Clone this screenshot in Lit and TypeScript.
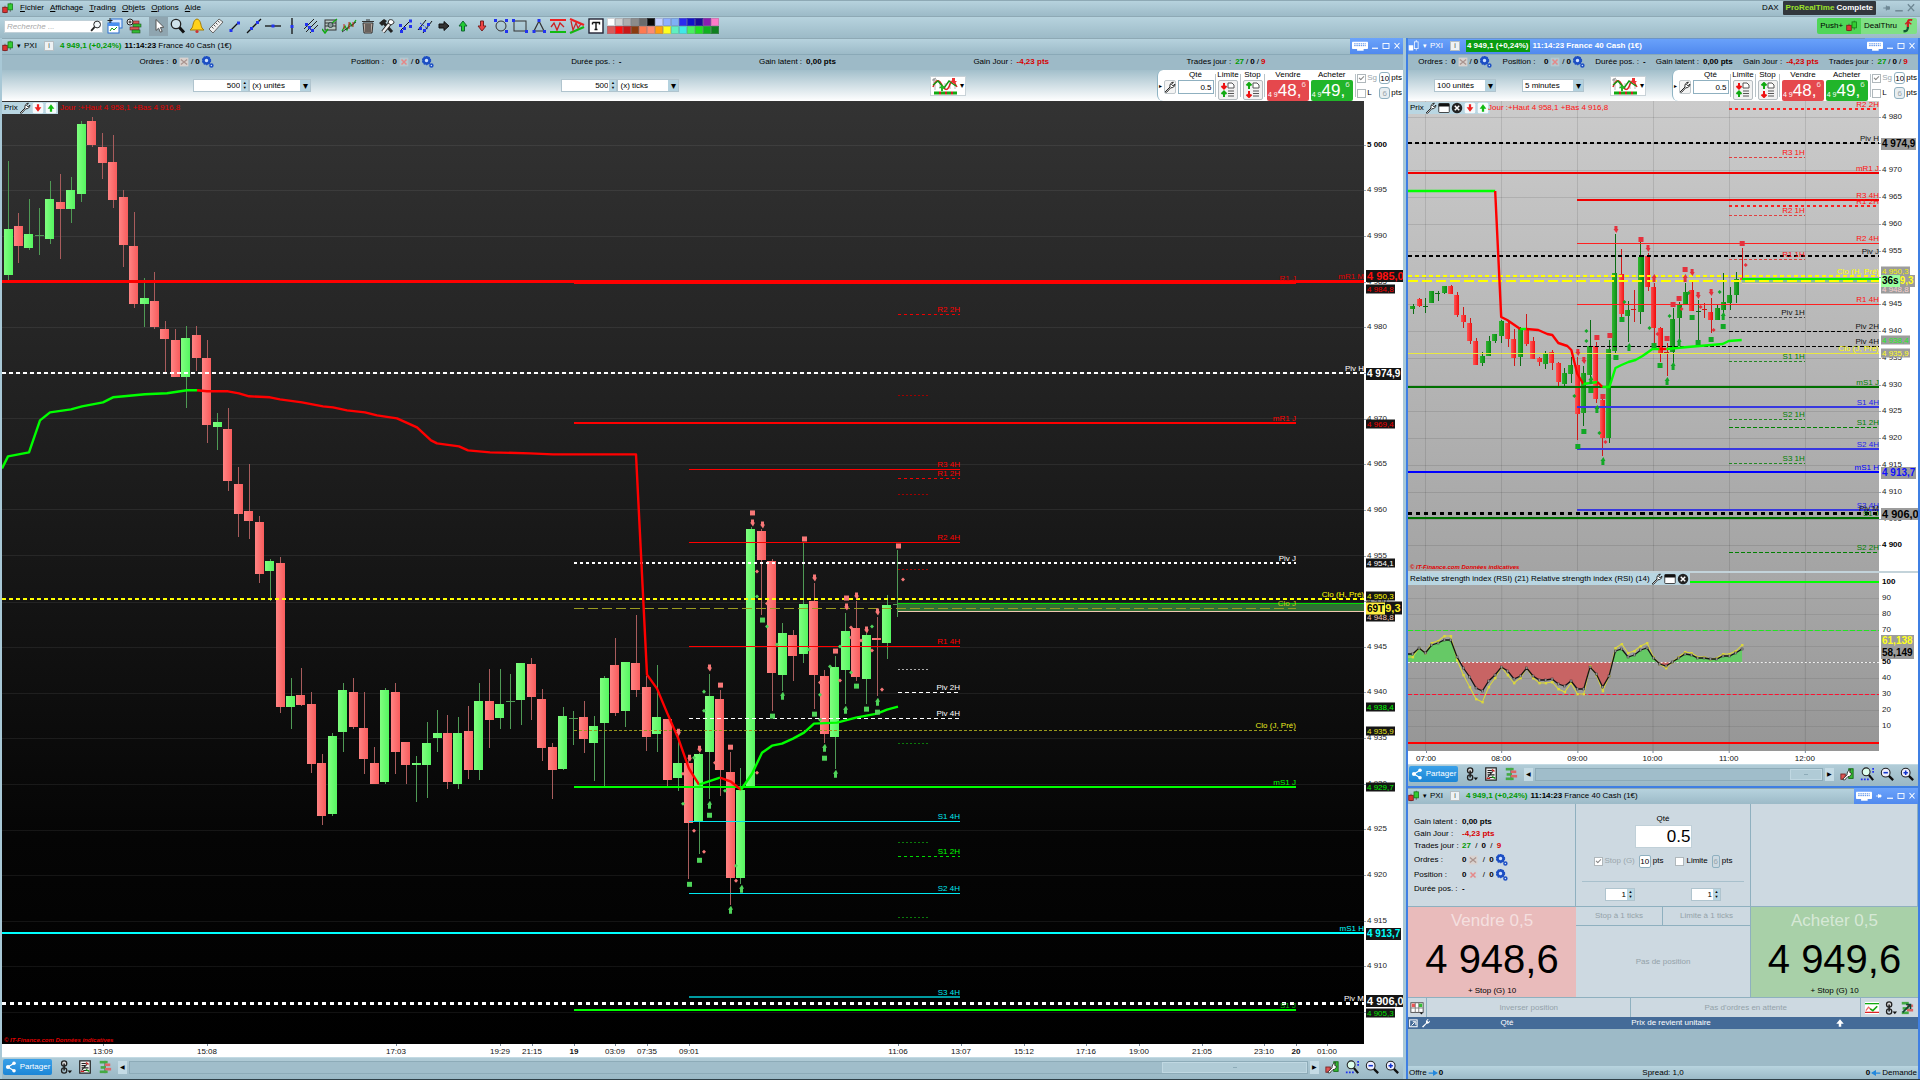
import { LitElement, html, svg, css, nothing } from "lit";
import { customElement, property } from "lit/decorators.js";
import { classMap } from "lit/directives/class-map.js";

/* ---------------------------------------------------------------- icons */

const ICONS: Record<string, unknown> = {
  candles: svg`<path d="M4 5v10M11 1v12" stroke="#444" /><rect x="1" y="7" width="6" height="7" fill="#d33" stroke="#711" /><rect x="8" y="2.500" width="6" height="8" fill="#3c3" stroke="#171" />`,
  candlesWhite: svg`<path d="M11 0v14" stroke="#fff" /><rect x="1" y="7" width="6" height="7" fill="#fff" /><rect x="8.500" y="2.500" width="5" height="9" fill="#5b96f5" stroke="#fff" />`,
  lens: svg`<circle cx="9.500" cy="6" r="4.500" fill="#f4f8fa" stroke="#222" stroke-width="1.300" /><path d="M6 9.500L1.500 14.500" stroke="#222" stroke-width="2.400" />`,
  windows: svg`<rect x="4" y="1" width="11" height="9" fill="#dcebff" stroke="#2a6fd0" /><rect x="1" y="5" width="11" height="10" fill="#fff" stroke="#2a6fd0" /><rect x="1" y="5" width="11" height="3" fill="#4b90f0" /><path d="M3 13l2-3 2 2 3-3" fill="none" stroke="#191" /><path d="M3 0v5M.5 2.500h5" stroke="#222" />`,
  depthPlus: svg`<rect x="5" y="3" width="8" height="3" fill="#d55" stroke="#622" stroke-width=".6" /><rect x="7" y="6" width="8" height="3" fill="#3b3" stroke="#252" stroke-width=".6" /><rect x="4" y="9" width="9" height="3" fill="#d55" stroke="#622" stroke-width=".6" /><rect x="6" y="12" width="8" height="3" fill="#3b3" stroke="#252" stroke-width=".6" /><circle cx="4" cy="4" r="3" fill="#eee" stroke="#222" /><path d="M4 2.500v3M2.500 4h3" stroke="#222" />`,
  depth: svg`<path d="M8 1v14" stroke="#333" /><rect x="2" y="1" width="9" height="3" fill="#4a4" /><rect x="8" y="4" width="6" height="3" fill="#d66" /><rect x="3" y="7" width="6" height="3" fill="#4a4" /><rect x="8" y="9" width="7" height="3" fill="#d66" /><rect x="2" y="12" width="9" height="3" fill="#4a4" />`,
  cursor: svg`<path d="M5 1.500v11l2.600-2.300 1.800 4 1.800-.8-1.800-3.900 3.400-.3z" fill="#fff" stroke="#555" />`,
  magnifier: svg`<path d="M9 9l5 5.500" stroke="#111" stroke-width="3" /><circle cx="6" cy="6" r="4.700" fill="#cfe2ea" stroke="#222" stroke-width="1.300" />`,
  bell: svg`<path d="M8 1c-4 1-3.500 6-5 9l-2 2h14l-2-2c-1.500-3-1-8-5-9z" fill="#ffd21a" stroke="#a67c00" /><circle cx="8" cy="13.500" r="1.600" fill="#c33" />`,
  ruler: svg`<path d="M1 11L11 1l4 3L5 15z" fill="#eee" stroke="#666" /><path d="M4 9l1.500 1.500M6 7l1.500 1.500M8 5l1.500 1.500M10 3l1.500 1.500" stroke="#555" />`,
  segment: svg`<path d="M4 12l7-7" stroke="#111" stroke-width="1.300" /><rect x="2.500" y="11" width="3" height="3" fill="#23e" /><rect x="10" y="3.500" width="3" height="3" fill="#23e" />`,
  line: svg`<path d="M1 15L15 1" stroke="#111" stroke-width="1.300" /><rect x="4" y="9" width="3" height="3" fill="#23e" /><rect x="10" y="3" width="3" height="3" fill="#23e" />`,
  hline: svg`<path d="M0 8h16" stroke="#111" stroke-width="1.300" /><rect x="6.500" y="6.500" width="3" height="3" fill="#23e" />`,
  vline: svg`<path d="M8 0v16" stroke="#111" stroke-width="1.300" /><rect x="6.500" y="7" width="3" height="3" fill="#23e" />`,
  fork: svg`<path d="M1 11L11 1M3 14L14 3M7 15l8-8M3 6l7 8" stroke="#222" /><rect x="2" y="5" width="3" height="3" fill="#23e" /><rect x="8" y="11" width="3" height="3" fill="#23e" /><rect x="5" y="8" width="3" height="3" fill="#23e" />`,
  fibo: svg`<rect x="3" y="2" width="11" height="10" fill="#b9c9c4" stroke="#333" /><path d="M3 5h11M3 8h11" stroke="#333" /><path d="M0 11l3 4 3-4" fill="none" stroke="#1a1" stroke-width="1.500" /><path d="M10 5l5-4" stroke="#1a1" stroke-width="1.300" /><circle cx="8.500" cy="7" r="2.500" fill="#899" stroke="#344" />`,
  trend: svg`<path d="M1 13l3-5 2 4 3-7 2 3 4-6" fill="none" stroke="#1a1" stroke-width="1.300" /><path d="M1 14L15 4" stroke="#333" /><path d="M3 6v5M8 4v7M12 4v5" stroke="#c22" />`,
  trash: svg`<path d="M3 5h10l-1 10H4z" fill="#b9a99f" stroke="#333" /><path d="M2 3.500h12M6 2h4M6 6v8M8 6v8M10 6v8" stroke="#333" stroke-width="1.200" />`,
  tools: svg`<path d="M3 3l10 11" stroke="#222" stroke-width="3" /><path d="M0 5l5-4 3 2-5 5z" fill="#222" /><path d="M12 4L4 14" stroke="#222" stroke-width="4" /><path d="M12 4L4 14" stroke="#eee" stroke-width="2.400" /><path d="M10 2c2-1 5 0 5 3l-3 2-3-2z" fill="#fff" stroke="#333" />`,
  pair: svg`<path d="M2 13l10-10" stroke="#111" /><g fill="#23e"><rect x="1" y="6" width="3" height="3" /><rect x="5" y="9" width="3" height="3" /><rect x="2" y="12" width="3" height="3" /><rect x="11" y="1.500" width="3" height="3" /><rect x="11" y="7" width="3" height="3" /></g>`,
  parallel: svg`<path d="M1 12L9 2M6 15L15 3" stroke="#111" /><path d="M3 5l8 6" stroke="#23e" stroke-dasharray="2 1" /><g fill="#23e"><rect x="2" y="9" width="3" height="3" /><rect x="6" y="11" width="3" height="3" /><rect x="10" y="5" width="3" height="3" /></g>`,
  right: svg`<path d="M3 6h5V3.500L13 8l-5 4.500V10H3z" fill="#333" stroke="#111" />`,
  up: svg`<path d="M6.500 13V8H4l4-5 4 5H9.500v5z" fill="#2c3" stroke="#163" />`,
  down: svg`<path d="M6.500 3v5H4l4 5 4-5H9.500V3z" fill="#e44" stroke="#722" />`,
  ellipse: svg`<circle cx="8" cy="8" r="5" fill="none" stroke="#333" /><g fill="#23e"><rect x="1" y="1" width="3" height="3" /><rect x="12" y="1" width="3" height="3" /><rect x="12" y="12" width="3" height="3" /></g>`,
  rect: svg`<rect x="2" y="3" width="12" height="10" fill="none" stroke="#333" /><g fill="#23e"><rect x="0" y="1" width="3" height="3" /><rect x="13" y="12" width="3" height="3" /></g>`,
  triangle: svg`<path d="M8 3l5 10H3z" fill="none" stroke="#333" stroke-width="1.200" /><g fill="#23e"><rect x="6.500" y="1" width="3" height="3" /><rect x="1.500" y="12" width="3" height="3" /><rect x="12" y="12" width="3" height="3" /></g>`,
  channel: svg`<path d="M0 2h16" stroke="#e22" stroke-width="2" /><path d="M0 14h16" stroke="#1b1" stroke-width="2" /><path d="M1 9l3-4 3 7 3-7 4 4" fill="none" stroke="#c22" stroke-width="1.300" />`,
  wedge: svg`<path d="M1 1l14 6" stroke="#e22" stroke-width="2.200" /><path d="M1 15l14-6" stroke="#1b1" stroke-width="2.200" /><path d="M2 3l2 9 3-7 2 5 3-4" fill="none" stroke="#c22" stroke-width="1.200" />`,
  textTool: svg`<rect x="1" y="1" width="14" height="14" fill="#fff" stroke="#223" stroke-width="1.400" /><path d="M4.500 4.500h7v2M4.500 4.500v2M8 4.500v7M6.500 11.500h3" fill="none" stroke="#111" stroke-width="1.400" />`,
  wrench: svg`<path d="M1.500 14.500L8 8c-.8-3 1.200-6.500 4.500-6.500L10 4.500 12 6.500l2.500-2.500c.3 3.500-3 5.500-5.500 5L3.500 15z" fill="#fff" stroke="#222" stroke-width="1.300" />`,
  wrenchWhite: svg`<path d="M1.500 14L8 8c-.8-3 1.200-6.500 4.500-6.500L10 4.500 12 6.500l2.500-2.500c.3 3.500-3 5.500-5.500 5L3.500 15z" fill="#fff" />`,
  pane: svg`<rect x="1" y="2" width="14" height="12" rx="1" fill="#fff" stroke="#111" /><rect x="1" y="2" width="14" height="4" fill="#111" />`,
  closeRound: svg`<circle cx="8" cy="8" r="7" fill="#222" /><path d="M5 5l6 6M11 5l-6 6" stroke="#fff" stroke-width="2" />`,
  tileDown: svg`<rect x="1" y="1" width="14" height="14" rx="2" fill="#f6fafc" /><path d="M6.500 3v4H3.500l4.500 6 4.500-6H9.500V3z" fill="#e22" />`,
  tileUp: svg`<rect x="1" y="1" width="14" height="14" rx="2" fill="#f6fafc" /><path d="M6.500 13V9H3.500l4.500-6 4.500 6H9.500v4z" fill="#1b1" />`,
  cancelGrey: svg`<rect x="1" y="1" width="14" height="14" fill="#d9d2cf" /><path d="M3 4l10 8M13 4L3 12" stroke="#a9948f" stroke-width="2" />`,
  cancelRed: svg`<rect x="1" y="1" width="14" height="14" fill="#ccd5da" opacity=".5" /><path d="M4 4l8 8M12 4l-8 8" stroke="#e58888" stroke-width="2.400" />`,
  gears: svg`<circle cx="6" cy="6" r="4" fill="#cfe0ff" stroke="#1d4fc4" stroke-width="3.400" /><circle cx="6" cy="6" r="5.500" fill="none" stroke="#1d4fc4" stroke-width="1.500" stroke-dasharray="2 1.500" /><circle cx="12.500" cy="12.500" r="2" fill="#cfe0ff" stroke="#1d4fc4" stroke-width="2" />`,
  keyboard: svg`<rect x="0" y="2" width="22" height="10" rx="1" fill="#fff" /><path d="M3 5h16M3 7.500h16" stroke="#4a86e8" stroke-width="1.300" stroke-dasharray="2 1" /><rect x="7" y="12" width="9" height="2.500" fill="#fff" />`,
  chartKind: svg`<rect x="0" y="0" width="26" height="18" fill="#fff" /><path d="M3 13V6M8 12V4M13 13V6M18 12V3M23 12V5" stroke="#bbb" /><path d="M1 3l3-2M2 1v5M0 3h5" stroke="#999" /><path d="M1 10c3-8 6-8 9-2s6 6 8-1l3-4 4 7" fill="none" stroke="#d22" stroke-width="1.500" /><path d="M1 8l5-4 6 7 5-7 7 5" fill="none" stroke="#191" stroke-width="1.500" /><path d="M2 16h5M9 16h4M15 16h4M21 16h4" stroke="#1a1" stroke-width="3" /><path d="M7 16h2M13 16h2M19 16h2" stroke="#c22" stroke-width="3" /><path d="M20 1h3v3h2l-3 3-4-3h2z" fill="#e33" /><path d="M9 14v-3H7l3-3 3 3h-2v3z" fill="#2b2" />`,
  limit: svg`<path d="M4 1v5M1.500 4L4 6.500 6.500 4" stroke="#e11" stroke-width="2" fill="none" /><path d="M4 15v-5M1.500 12L4 9.500 6.500 12" stroke="#1a1" stroke-width="2" fill="none" /><path d="M8 1h4l2 2v3H8zM8 9h6M8 11.500h6M8 14h6" fill="#fff" stroke="#555" />`,
  stop: svg`<path d="M4 7V1M1.500 3.500L4 1l2.500 2.500" stroke="#1a1" stroke-width="2" fill="none" /><path d="M4 9v6M1.500 12.500L4 15l2.500-2.500" stroke="#e11" stroke-width="2" fill="none" /><path d="M8 1h4l2 2v3H8zM8 9h6M8 11.500h6M8 14h6" fill="#fff" stroke="#555" />`,
  share: svg`<path d="M12 3L4 8l8 5" fill="none" stroke="#fff" stroke-width="1.600" /><circle cx="12" cy="3" r="2.400" fill="#fff" /><circle cx="4" cy="8" r="2.800" fill="#fff" /><circle cx="12" cy="13" r="2.400" fill="#fff" />`,
  chain: svg`<circle cx="7" cy="4" r="3" fill="#ddd" stroke="#222" stroke-width="1.500" /><path d="M7 4v8" stroke="#222" stroke-width="1.800" /><circle cx="7" cy="12" r="3" fill="none" stroke="#222" stroke-width="1.500" /><path d="M11 12h5l-2.500 3z" fill="#111" />`,
  note: svg`<rect x="2" y="1" width="12" height="14" fill="#eee" stroke="#222" stroke-width="1.400" /><path d="M4 4h5M4 6.500h4M4 12l6-7M6 12h6M4 9h8" stroke="#222" stroke-width="1.300" /><path d="M9 3l3 2M3 13h4" stroke="#c22" stroke-width="1.500" /><path d="M9 11l4 2" stroke="#191" stroke-width="1.600" />`,
  wrenchCandles: svg`<rect x="1" y="8" width="5" height="6" fill="#d55" stroke="#722" /><rect x="10" y="2" width="5" height="11" fill="#3b3" stroke="#161" /><path d="M3 14l5-5c0-3 1-5 4-6l-1 3 2 1c0 3-2 4-4 4l-4 4z" fill="#fff" stroke="#222" />`,
  depthArrow: svg`<rect x="2" y="1" width="8" height="3" fill="#4a4" /><rect x="8" y="4" width="7" height="3" fill="#d66" /><rect x="3" y="7" width="7" height="3" fill="#4a4" /><rect x="8" y="9" width="7" height="3" fill="#d66" /><rect x="2" y="12" width="8" height="3" fill="#4a4" /><path d="M3 13l8-8M7 4h5v5" fill="none" stroke="#143" stroke-width="1.800" />`,
  zoomFit: svg`<path d="M10 9l5 6" stroke="#111" stroke-width="2.600" /><circle cx="7" cy="5.500" r="4.500" fill="#dfe" stroke="#222" stroke-width="1.200" /><path d="M1 14h9M15 1v7" stroke="#23e" stroke-width="2" stroke-dasharray="2 1.500" />`,
  zoomOut: svg`<path d="M9 9l6 6" stroke="#111" stroke-width="2.600" /><circle cx="6.500" cy="6.500" r="5" fill="#eef" stroke="#222" stroke-width="1.200" /><path d="M4 6.500h5" stroke="#13c" stroke-width="1.800" />`,
  zoomIn: svg`<path d="M9 9l6 6" stroke="#111" stroke-width="2.600" /><circle cx="6.500" cy="6.500" r="5" fill="#eef" stroke="#222" stroke-width="1.200" /><path d="M4 6.500h5M6.500 4v5" stroke="#13c" stroke-width="1.800" />`,
  pin: svg`<path d="M2 8h5M7 4v8M7 6h5v4H7z" fill="currentColor" stroke="currentColor" stroke-width="1.500" />`,
  min: svg`<path d="M2 12.500h12" stroke="currentColor" stroke-width="2.400" />`,
  max: svg`<rect x="2" y="3" width="12" height="10" fill="none" stroke="currentColor" stroke-width="1.800" />`,
  close: svg`<path d="M3 2l10 11M13 2L3 13" stroke="currentColor" stroke-width="2.200" />`,
  thru: svg`<path d="M14 1c-4-1-5 1-5 4v4" stroke="#c22" stroke-width="2.600" fill="none" /><path d="M6 6l3-3 4 3" fill="none" stroke="#c22" stroke-width="1.600" /><path d="M9 9c0 4-1 5-5 5" stroke="#153" stroke-width="2.600" fill="none" />`,
  layout: svg`<rect x="1" y="2" width="14" height="11" fill="#fff" stroke="#444" /><rect x="2" y="3" width="4" height="4" fill="#e55" /><rect x="10" y="3" width="4" height="4" fill="#3b3" /><path d="M6 2v11M10 2v11M1 8h14" stroke="#777" /><path d="M11 13h4l-2 2.500z" fill="#111" />`,
  signal: svg`<rect x="0" y="1" width="16" height="14" fill="#fff" /><path d="M0 3h16" stroke="#1a1" stroke-width="1.500" /><path d="M0 13h16" stroke="#d22" stroke-width="1.500" /><path d="M1 11l3-4 3 3" fill="none" stroke="#e66" stroke-width="1.500" /><path d="M6 9l3 2 5-5" fill="none" stroke="#1a1" stroke-width="1.800" />`,
  export: svg`<rect x="1" y="3" width="12" height="11" fill="none" stroke="#fff" stroke-width="1.600" /><path d="M4 12l5-5M6 6h5v5" stroke="#fff" stroke-width="1.600" fill="none" />`,
  upWhite: svg`<path d="M6 14V9H2l6-7 6 7h-4v5z" fill="#fff" />`,
  arrowRight: svg`<path d="M1 8h9M9 5l5 3-5 3z" fill="#28d" stroke="#28d" stroke-width="2" />`,
  arrowLeft: svg`<path d="M15 8H6M7 5L2 8l5 3z" fill="#28d" stroke="#28d" stroke-width="2" />`,
};

const icon = (name: string, size = "") => {
  const box = name === "keyboard" ? "0 0 22 16" : name === "chartKind" ? "0 0 26 18" : "0 0 16 16";
  return html`<svg class="icon ${size}" viewBox=${box} aria-hidden="true">${ICONS[name]}</svg>`;
};

const base = css`
  * { box-sizing: border-box; }
  :host {
    font-family: "Liberation Sans", Arial, sans-serif;
    font-size: 8px;
    line-height: 10px;
    color: #000;
  }
  button, input, select { font: inherit; color: inherit; margin: 0; padding: 0; }
  button { border: 0; background: none; display: inline-flex; align-items: center; justify-content: center; }
  input { min-width: 0; border: 1px solid #8fb0c0; background: #fff; text-align: right; border-radius: 0; }
  .icon { width: 14px; height: 14px; flex: none; display: block; }
  .icon.s { width: 10px; height: 10px; }
  .icon.m { width: 12px; height: 12px; }
  .icon.w { width: 16px; height: 12px; }
  .icon.kind { width: 26px; height: 18px; }
  .tick {
    appearance: none; width: 9px; height: 9px; border: 1px solid #b0b8bc; background: #fff;
    position: relative; flex: none;
  }
  .tick:checked::after {
    content: ""; position: absolute; left: 2px; top: 0; width: 2px; height: 4px;
    border: solid #888; border-width: 0 1px 1px 0; transform: rotate(45deg);
  }
  .pos { color: #009a00; }
  .neg { color: #d80000; }
  .dim { color: #9aa6ac; }
  b { white-space: nowrap; }
`;

/* ---------------------------------------------------------------- chart */

type Candle = [number, number, number, number, "g" | "r"];
/** x1, x2, y, colour, width, dash, label, label colour */
type Level = [number, number, number, string, number, string?, string?, string?];
type Tag = { y: number; text: string; fg: string; size?: "md" | "lg"; lead?: string };
type Run = { c: string; p: string };
type Mark = [string, [number, number][]];

interface ChartData {
  box: [number, number, number, number];
  dark: boolean;
  first: number;
  pitch: number;
  body: number;
  candles: Candle[];
  levels: Level[];
  runs: Run[];
  marks: Mark[];
  tags: Tag[];
  scale: { top: number; y: number; step: number; count: number; bold: number[] };
  verticals: number[];
  zone: { x: number; top: number; bottom: number; fill: string; line: string; base: string };
}

const pct = (v: number, from: number, span: number) => `${(((v - from) / span) * 100).toFixed(3)}%`;

const glyph = (kind: string, x: number, y: number) => {
  const red = kind[0] === "r";
  const fill = red ? "var(--mark-red)" : "var(--mark-green)";
  switch (kind[1]) {
    case "s":
      return svg`<rect x=${x - 2} y=${y - 2} width="5" height="5" fill=${fill} />`;
    case "d":
      return svg`<path d="M${x - 1} ${y - 3}h3v3h1l-2 4-3-4h1z" fill=${fill} />`;
    case "u":
      return svg`<path d="M${x - 1} ${y + 4}h3v-4h1l-2-4-3 4h1z" fill=${fill} />`;
    default:
      return svg`<path d="M${x} ${y - 2}l2 2-2 2-2-2z" fill=${fill} />`;
  }
};

@customElement("price-chart")
class PriceChart extends LitElement {
  @property({ attribute: false }) data!: ChartData;

  static styles = [
    base,
    css`
      :host { display: grid; grid-template-columns: minmax(0, 1fr) 39px; min-height: 0; flex: 1; background: #fff; }
      .plot { position: relative; overflow: hidden; background: linear-gradient(#cbcbcb, #a4a4a4); --mark-red: #e5303c; --mark-green: #12a826; }
      .plot.dark { background: linear-gradient(#333 0, #1f1f1f 35%, #050505 78%, #000); --mark-red: #f87878; --mark-green: #4fd45a; }
      svg.full { position: absolute; inset: 0; width: 100%; height: 100%; }
      .geo { shape-rendering: crispEdges; }
      .geo .soft { shape-rendering: auto; }
      text { font-size: 8px; }
      .axis { position: relative; overflow: hidden; }
      .price { position: absolute; left: 3px; transform: translateY(-50%); white-space: nowrap; color: #222; }
      .price::before { content: ""; position: absolute; left: -3px; top: 5px; width: 2px; height: 1px; background: #9ab; }
      .price.strong { font-weight: bold; color: #000; }
      .tag { position: absolute; left: 2px; padding: 0 1px; line-height: 9px; transform: translateY(-50%); white-space: nowrap; background: #9c9c9c; }
      .dark .tag { background: #151515; }
      .tag.md { font-size: 10px; font-weight: bold; line-height: 12px; }
      .tag.lg { font-size: 11px; font-weight: bold; line-height: 12px; }
      .lead { background: #9dffa0; color: #000; display: inline-block; margin-left: -1px; padding: 0 1px; }
      .dark .lead { background: #ffee40; font-size: 10px; }
      .credit { position: absolute; left: 2px; bottom: 0; color: #e00000; font-size: 6px; line-height: 7px; font-weight: bold; font-style: italic; }
    `,
  ];

  render() {
    const d = this.data;
    const [bx, by, bw, bh] = d.box;
    const s = d.scale;
    const rows = Array.from({ length: s.count }, (_, i) => i);
    const priceText = (v: number) => `${Math.floor(v / 1000)} ${String(v % 1000).padStart(3, "0")}`;
    return html`
      <div class=${classMap({ plot: true, dark: d.dark })}>
        <svg class="full geo" viewBox="${bx} ${by} ${bw} ${bh}" preserveAspectRatio="none" aria-hidden="true">
          <defs>
            <linearGradient id="g"><stop offset="0" stop-color=${d.dark ? "#80ff80" : "#2fb32f"} /><stop offset="1" stop-color=${d.dark ? "#55f560" : "#088a14"} /></linearGradient>
            <linearGradient id="r"><stop offset="0" stop-color=${d.dark ? "#ff8484" : "#ff5555"} /><stop offset="1" stop-color=${d.dark ? "#f85c5c" : "#f00f0f"} /></linearGradient>
          </defs>
          ${rows.map((i) => {
            const y = Math.round(s.y + i * s.step);
            return svg`<rect x=${bx} y=${y} width=${bw} height="1" fill=${d.dark ? "#fff" : "#000"} opacity=${d.dark ? 0.07 : 0.1} />`;
          })}
          ${d.verticals.map((x) => svg`<rect x=${x} y=${by} width="1" height=${bh} fill="#000" opacity=".1" />`)}
          ${d.candles.map(([hi, top, bot, lo, k], i) => {
            const x = d.first + i * d.pitch;
            const wick = d.dark ? (k === "g" ? "#4f9a55" : "#a85c5c") : k === "g" ? "#0b6b14" : "#d01818";
            return svg`<rect x=${Math.round(x)} y=${hi} width="1" height=${lo - hi} fill=${wick} />
              <rect x=${Math.round(x - d.body / 2)} y=${top} width=${d.body} height=${Math.max(1, bot - top)}
                fill=${bot - top < 2 ? wick : `url(#${k})`} />`;
          })}
          <rect x=${d.zone.x} y=${d.zone.top} width=${bx + bw - d.zone.x} height=${d.zone.bottom - d.zone.top} fill=${d.zone.fill} />
          <rect x=${d.zone.x} y=${d.zone.top} width=${bx + bw - d.zone.x} height=${d.dark ? 1 : 2} fill=${d.zone.line} />
          <rect x=${d.zone.x} y=${d.zone.bottom} width=${bx + bw - d.zone.x} height="1" fill=${d.zone.base} />
          ${d.levels.map(([x1, x2, y, c, w, dash]) => {
            const cy = w % 2 ? y + 0.5 : y;
            return svg`<line x1=${x1} x2=${x2} y1=${cy} y2=${cy} stroke=${c} stroke-width=${w} stroke-dasharray=${dash || "none"} />`;
          })}
          <g class="soft">
            ${d.runs.map((r) => svg`<polyline points=${r.p} fill="none" stroke=${r.c} stroke-width="2.400" stroke-linejoin="round" />`)}
            ${d.marks.map(([k, pts]) => pts.map(([x, y]) => glyph(k, x, y)))}
          </g>
        </svg>
        <svg class="full">
          ${d.levels.map(([, x2, y, c, , , label, lc]) =>
            label
              ? svg`<text x=${pct(x2, bx, bw)} y=${pct(y - 2, by, bh)} text-anchor="end" fill=${lc || c}>${label}</text>`
              : nothing,
          )}
        </svg>
        <span class="credit">© IT-Finance.com Données indicatives</span>
      </div>
      <div class=${classMap({ axis: true, dark: d.dark })}>
        ${rows.map((i) => {
          const v = s.top - i * 5;
          return html`<span class=${classMap({ price: true, strong: s.bold.includes(v) })} style="top:${pct(s.y + i * s.step, by, bh)}">${priceText(v)}</span>`;
        })}
        ${d.tags.map(
          (t) => html`<span class="tag ${t.size ?? ""}" style="top:${pct(t.y, by, bh)};color:${t.fg}"
            >${t.lead ? html`<span class="lead">${t.lead}</span>` : nothing}${t.text}</span
          >`,
        )}
      </div>
    `;
  }
}

const RED = "#ff0000";
const LIME = "#00ff00";

const MAIN: ChartData = {
  box: [2, 101, 1362, 942],
  dark: true,
  first: 8,
  pitch: 10.464,
  body: 9,
  scale: { top: 5000, y: 144.800, step: 45.585, count: 20, bold: [5000] },
  verticals: [],
  zone: { x: 898, top: 602, bottom: 610, fill: "#2f6f33", line: "#00e000", base: "#f0c8b0" },
  candles: [
    [161, 229, 275, 280, "g"], [213, 226, 246, 263, "r"], [199, 234, 248, 250, "g"], [208, 235, 236, 255, "g"],
    [181, 199, 239, 244, "g"], [174, 202, 209, 259, "r"], [177, 190, 209, 223, "g"], [121, 124, 194, 202, "g"],
    [117, 121, 145, 147, "r"], [133, 147, 163, 179, "r"], [135, 162, 200, 208, "r"], [190, 197, 245, 267, "r"],
    [212, 246, 304, 308, "r"], [278, 298, 304, 327, "g"], [272, 301, 327, 329, "r"], [321, 329, 339, 373, "r"],
    [329, 340, 377, 377, "r"], [326, 338, 377, 408, "g"], [326, 335, 358, 371, "r"], [340, 358, 425, 443, "r"],
    [413, 422, 427, 450, "g"], [408, 429, 481, 491, "r"], [467, 484, 514, 537, "r"], [464, 511, 521, 539, "r"],
    [516, 522, 573, 582, "r"], [559, 561, 571, 600, "g"], [557, 563, 706, 712, "r"], [677, 695, 706, 728, "g"],
    [667, 694, 704, 705, "r"], [691, 703, 763, 772, "r"], [753, 762, 815, 824, "r"], [732, 735, 813, 815, "g"],
    [682, 689, 731, 751, "g"], [677, 691, 726, 728, "r"], [691, 727, 758, 773, "r"], [746, 762, 783, 783, "r"],
    [687, 689, 781, 783, "g"], [682, 691, 751, 773, "r"], [741, 741, 764, 783, "r"], [755, 762, 764, 801, "g"],
    [721, 742, 764, 797, "g"], [709, 732, 737, 751, "g"], [714, 732, 781, 788, "r"], [716, 732, 783, 788, "g"],
    [705, 730, 769, 778, "r"], [682, 700, 769, 779, "g"], [668, 700, 719, 747, "r"], [668, 703, 717, 728, "g"],
    [673, 700, 701, 728, "g"], [662, 662, 699, 724, "g"], [657, 663, 696, 719, "r"], [688, 698, 747, 760, "r"],
    [742, 746, 769, 798, "r"], [706, 715, 768, 769, "g"], [710, 717, 718, 744, "g"], [700, 716, 738, 752, "r"],
    [715, 725, 742, 780, "g"], [675, 677, 722, 786, "g"], [637, 664, 712, 715, "r"], [661, 661, 710, 726, "g"],
    [614, 662, 689, 696, "r"], [675, 686, 736, 750, "r"], [664, 716, 733, 751, "g"], [718, 718, 779, 786, "r"],
    [728, 762, 777, 790, "g"], [755, 762, 822, 878, "r"], [752, 753, 820, 853, "g"], [673, 695, 751, 798, "g"],
    [689, 698, 769, 795, "r"], [751, 771, 877, 904, "r"], [767, 789, 877, 883, "g"], [527, 529, 786, 786, "g"],
    [529, 531, 560, 614, "r"], [559, 561, 672, 710, "r"], [622, 632, 674, 690, "g"], [629, 634, 655, 680, "r"],
    [543, 603, 653, 662, "g"], [582, 600, 674, 708, "r"], [669, 675, 733, 742, "r"], [655, 666, 736, 768, "g"],
    [612, 630, 669, 703, "g"], [600, 627, 676, 680, "r"], [632, 634, 678, 703, "g"], [616, 637, 639, 695, "r"],
    [594, 604, 642, 658, "g"], [550, 603, 604, 616, "g"],
  ],
  levels: [
    [2, 1364, 281, "#ff0000", 3, "", "mR1 M", "#e00000"],
    [574, 1296, 283, "#ff0000", 1, "", "R1 J", "#e00000"],
    [898, 960, 314, "#f00000", 1, "3 3", "R2 2H", "#ff0000"],
    [2, 1364, 373, "#ffffff", 2, "4 3", "Piv H"],
    [898, 928, 395, "#a00000", 1, "2 2"],
    [574, 1296, 423, RED, 2, "", "mR1 J"],
    [689, 960, 469, RED, 1, "", "R3 4H"],
    [898, 960, 478, "#f00000", 1, "3 3", "R1 2H", "#ff0000"],
    [898, 928, 494, "#a00000", 1, "2 2"],
    [689, 960, 542, RED, 1, "", "R2 4H"],
    [574, 1296, 563, "#ffffff", 2, "3 3", "Piv J"],
    [898, 928, 569, "#a00000", 1, "2 2"],
    [2, 1364, 598, "#ffff00", 2, "4 3", "Clo (H, Pré)"],
    [574, 1296, 607, "#9a9a20", 1, "10 4", "Clo J", "#c8c820"],
    [689, 960, 645, RED, 1, "", "R1 4H"],
    [898, 928, 668, "#aaaaaa", 1, "2 2"],
    [898, 960, 691, "#ffffff", 1, "4 3", "Piv 2H"],
    [689, 960, 717, "#ffffff", 1, "4 3", "Piv 4H"],
    [574, 1296, 729, "#98981c", 1, "3 2", "Clo (J, Pré)", "#e8e820"],
    [898, 928, 742, "#0a7a0a", 1, "2 2"],
    [574, 1296, 786, LIME, 2, "", "mS1 J"],
    [689, 960, 820, "#00e8f0", 1, "", "S1 4H"],
    [898, 928, 841, "#0a7a0a", 1, "2 2"],
    [898, 960, 855, "#00d800", 1, "3 3", "S1 2H", LIME],
    [689, 960, 892, "#00e8f0", 1, "", "S2 4H"],
    [898, 928, 916, "#0a7a0a", 1, "2 2"],
    [2, 1364, 932, "#00ffff", 2, "", "mS1 H"],
    [689, 960, 996, "#009aa0", 2, "", "S3 4H", "#00e8f0"],
    [574, 1296, 1009, LIME, 2, "", "S1 J", "#0ab00a"],
    [2, 1364, 1002, "#ffffff", 3, "4 4", "Piv M"],
  ],
  runs: [
    { c: LIME, p: "2,468 8,456 29,452 40,420 50,412 71,409 82,406 103,402 113,397 124,396 145,394 167,393 187,390 197,390" },
    { c: "#ff0000", p: "197,390 207,391 228,391 239,393 249,396 270,397 280,399 302,402 323,406 333,407 347,410 365,412 377,415 397,418 417,427 431,440 437,443 459,446 468,450 490,452 530,453 553,454 636,454 647,674 657,688 667,712 678,737 689,768 699,784" },
    { c: LIME, p: "699,784 720,777" },
    { c: "#ff0000", p: "720,777 731,781 741,789" },
    { c: LIME, p: "741,789 752,773 762,752 772,745 782,743 793,738 804,732 814,723 837,722 856,717 877,713 887,709 898,706" },
  ],
  marks: [
    ["rs", [[752, 512], [804, 538], [898, 545], [846, 597], [835, 650], [720, 684], [730, 746]]],
    ["rd", [[752, 522], [762, 524], [814, 577], [846, 606], [856, 595], [866, 629], [877, 611], [709, 667], [699, 748], [689, 757], [678, 731]]],
    ["gs", [[762, 619], [772, 715], [814, 713], [824, 757], [856, 685], [866, 708], [877, 711], [709, 814], [699, 859], [689, 883]]],
    ["gu", [[782, 695], [845, 709], [877, 701], [824, 747], [835, 773], [709, 804], [741, 888], [730, 909]]],
    ["rx", [[903, 579], [882, 689], [757, 571], [767, 603], [757, 772], [715, 762], [704, 851], [694, 830], [736, 880], [683, 773], [851, 627], [851, 637], [820, 682], [840, 680], [861, 640], [872, 650]]],
    ["gx", [[872, 626], [757, 596], [767, 626], [704, 691], [704, 710], [694, 757], [683, 803], [725, 790], [736, 865], [820, 694], [820, 719], [830, 666], [840, 646], [851, 672], [777, 644], [809, 649]]],
  ],
  tags: [
    { y: 289, text: "4 984,8", fg: "#f00000" },
    { y: 276, text: "4 985,0", fg: "#ff1010", size: "lg" },
    { y: 374, text: "4 974,9", fg: "#ffffff", size: "md" },
    { y: 424, text: "4 969,4", fg: "#f00000" },
    { y: 563, text: "4 954,1", fg: "#ffffff" },
    { y: 595, text: "4 950,3", fg: "#ffff00" },
    { y: 616, text: "4 948,8", fg: "#f8c8b8" },
    { y: 607, text: "9,3", fg: "#ffee20", size: "lg", lead: "69T" },
    { y: 706, text: "4 938,4", fg: "#00ff00" },
    { y: 730, text: "4 935,9", fg: "#e0e020" },
    { y: 786, text: "4 929,7", fg: "#00f000" },
    { y: 933, text: "4 913,7", fg: "#00ffff", size: "md" },
    { y: 1012, text: "4 905,3", fg: "#00e000" },
    { y: 1000, text: "4 906,0", fg: "#ffffff", size: "lg" },
  ],
};

const SIDE: ChartData = {
  box: [1408, 101, 470, 470],
  dark: false,
  first: 1412.700,
  pitch: 6.320,
  body: 5,
  scale: { top: 4980, y: 116.700, step: 26.790, count: 17, bold: [4900] },
  verticals: [1425, 1501, 1577, 1652, 1728, 1804],
  zone: { x: 1741, top: 278, bottom: 283, fill: "#8fc48f", line: "#00f000", base: "#e8c4c4" },
  candles: [
    [304, 306, 309, 314, "g"], [298, 299, 306, 307, "r"], [298, 306, 307, 313, "g"], [291, 291, 303, 303, "g"],
    [291, 293, 294, 301, "g"], [286, 286, 293, 294, "g"], [285, 286, 294, 294, "r"], [292, 295, 315, 317, "r"],
    [307, 315, 322, 328, "r"], [318, 323, 341, 344, "r"], [338, 341, 365, 365, "r"], [352, 356, 363, 366, "g"],
    [336, 341, 356, 356, "g"], [334, 334, 341, 343, "g"], [320, 321, 336, 343, "g"], [322, 323, 339, 347, "r"],
    [329, 339, 358, 366, "r"], [327, 329, 357, 366, "g"], [314, 329, 344, 346, "r"], [337, 341, 359, 359, "r"],
    [357, 358, 362, 366, "r"], [351, 353, 364, 369, "g"], [350, 352, 363, 370, "r"], [362, 363, 382, 386, "r"],
    [368, 373, 384, 388, "g"], [357, 365, 374, 383, "g"], [357, 365, 414, 440, "r"], [366, 373, 413, 426, "g"],
    [320, 346, 375, 382, "g"], [342, 346, 399, 403, "r"], [399, 400, 438, 456, "r"], [340, 349, 438, 443, "g"],
    [234, 273, 351, 353, "g"], [249, 274, 314, 317, "r"], [301, 310, 316, 342, "g"], [290, 309, 310, 322, "r"],
    [242, 257, 312, 324, "g"], [253, 256, 287, 291, "r"], [283, 287, 328, 345, "r"], [327, 328, 354, 362, "r"],
    [343, 352, 353, 376, "r"], [308, 319, 352, 363, "g"], [302, 305, 318, 340, "g"], [283, 292, 304, 304, "g"],
    [280, 290, 311, 311, "r"], [300, 311, 312, 340, "g"], [303, 309, 310, 318, "r"], [298, 312, 320, 333, "r"],
    [305, 308, 320, 320, "g"], [273, 302, 310, 313, "g"], [287, 295, 303, 310, "g"], [272, 279, 295, 303, "g"],
    [248, 278, 280, 282, "r"],
  ],
  levels: [
    [1728, 1878, 109, "#ff2020", 2, "3 3", "R2 2H", "#ff1010"],
    [1408, 1878, 143, "#000000", 2, "4 3", "Piv H", "#111111"],
    [1728, 1804, 157, "#e04040", 1, "3 2", "R3 1H", "#ff1010"],
    [1408, 1878, 173, "#f00000", 2, "", "mR1 J", "#ff1010"],
    [1577, 1878, 200, "#f00000", 2, "", "R3 4H", "#ff1010"],
    [1728, 1878, 206, "#ff2020", 2, "3 3", "R1 2H", "#ff1010"],
    [1728, 1804, 215, "#e04040", 1, "3 2", "R2 1H", "#ff1010"],
    [1577, 1878, 243, "#ff2020", 1, "", "R2 4H", "#ff1010"],
    [1408, 1878, 256, "#000000", 2, "4 3", "Piv J", "#111111"],
    [1728, 1804, 259, "#e04040", 1, "3 2", "R1 1H", "#ff1010"],
    [1408, 1878, 276, "#ffff00", 2, "4 3", "Clo (H, Pré)", "#ffff00"],
    [1408, 1878, 281, "#ffff00", 2, "10 4"],
    [1577, 1878, 304, "#ff2020", 1, "", "R1 4H", "#ff1010"],
    [1728, 1804, 317, "#444444", 1, "3 2", "Piv 1H", "#111111"],
    [1728, 1878, 331, "#000000", 1, "4 2", "Piv 2H", "#111111"],
    [1577, 1878, 346, "#000000", 1, "4 2", "Piv 4H", "#111111"],
    [1408, 1878, 353, "#e8e840", 1, "", "Clo (J, Pré)", "#ffff00"],
    [1728, 1804, 361, "#228822", 1, "3 2", "S1 1H", "#008000"],
    [1408, 1878, 387, "#007000", 2, "", "mS1 J", "#008000"],
    [1577, 1878, 407, "#3838e0", 2, "", "S1 4H", "#2020f0"],
    [1728, 1804, 419, "#228822", 1, "3 2", "S2 1H", "#008000"],
    [1728, 1878, 427, "#008000", 1, "4 2", "S1 2H"],
    [1577, 1878, 449, "#3838e0", 2, "", "S2 4H", "#2020f0"],
    [1728, 1804, 463, "#228822", 1, "3 2", "S3 1H", "#008000"],
    [1408, 1878, 472, "#0000ff", 2, "", "mS1 H"],
    [1577, 1878, 510, "#3838e0", 2, "", "S3 4H", "#2020f0"],
    [1408, 1878, 518, "#007000", 2, "", "S1 J"],
    [1408, 1878, 513, "#000000", 3, "4 4", "Piv M", "#111111"],
    [1728, 1878, 552, "#008000", 1, "4 2", "S2 2H"],
  ],
  runs: [
    { c: "#00ff00", p: "1408,191 1495,191" },
    { c: "#ff0000", p: "1495,191 1501,317 1507,320 1520,329" },
    { c: "#00ff00", p: "1520,329 1526,329" },
    { c: "#ff0000", p: "1526,329 1538,330 1547,334 1552,335 1558,343 1567,346 1571,350 1577,374 1583,384" },
    { c: "#00ff00", p: "1583,384 1597,382" },
    { c: "#ff0000", p: "1597,382 1602,387" },
    { c: "#00ff00", p: "1602,387 1609,387 1615,368 1621,365 1628,362 1635,360 1642,356 1652,349 1659,349" },
    { c: "#ff0000", p: "1659,349 1666,349" },
    { c: "#00ff00", p: "1666,349 1687,347 1722,344 1728,341 1741,340" },
  ],
  marks: [
    ["rd", [[1615, 229], [1647, 248], [1691, 272], [1697, 295], [1710, 292], [1577, 352], [1583, 360]]],
    ["ru", [[1653, 278], [1684, 278]]],
    ["rs", [[1640, 239], [1741, 243], [1684, 269], [1678, 298], [1672, 304], [1666, 338], [1609, 335], [1596, 337], [1602, 396]]],
    ["gs", [[1621, 319], [1615, 357], [1653, 345], [1659, 365], [1691, 317], [1697, 342], [1710, 339], [1722, 326], [1590, 390], [1583, 431], [1577, 446]]],
    ["gu", [[1628, 347], [1678, 342], [1672, 366], [1666, 381], [1722, 316], [1590, 380], [1596, 409], [1602, 461]]],
    ["rx", [[1745, 265], [1700, 307], [1713, 330], [1605, 442], [1657, 334], [1681, 309]]],
    ["gx", [[1586, 331], [1586, 341], [1574, 396], [1624, 302], [1649, 328], [1669, 316], [1688, 293], [1719, 292], [1599, 433]]],
  ],
  tags: [
    { y: 144, text: "4 974,9", fg: "#000000", size: "md" },
    { y: 271, text: "4 950,3", fg: "#f0f000" },
    { y: 289, text: "4 948,8", fg: "#f8d0d0" },
    { y: 281, text: "9,3", fg: "#ffff20", size: "md", lead: "36s" },
    { y: 340, text: "4 938,4", fg: "#20f020" },
    { y: 353, text: "4 935,9", fg: "#ffff20" },
    { y: 473, text: "4 913,7", fg: "#1010ff", size: "md" },
    { y: 514, text: "4 906,0", fg: "#000000", size: "lg" },
  ],
};

/* ------------------------------------------------------------------ rsi */

const RSI_SLOW = [
  654, 648, 653, 645, 643, 640, 640, 657, 668, 677, 688, 691, 681, 675, 667, 671, 679, 676, 668, 676, 680, 680, 679, 684,
  686, 681, 689, 689, 667, 674, 687, 676, 651, 649, 657, 655, 650, 648, 658, 664, 666, 662, 658, 654, 655, 658, 658, 659,
  659, 656, 656, 653, 649,
];
const RSI_FAST = [
  657, 648, 653, 643, 641, 636, 636, 660, 675, 687, 699, 702, 687, 678, 667, 675, 683, 678, 668, 678, 683, 683, 682, 689,
  692, 683, 694, 694, 666, 675, 691, 676, 648, 644, 653, 651, 646, 643, 657, 664, 668, 662, 657, 652, 653, 657, 657, 659,
  658, 654, 654, 651, 645,
];

@customElement("rsi-chart")
class RsiChart extends LitElement {
  static styles = [
    base,
    css`
      :host { display: grid; grid-template-columns: minmax(0, 1fr) 39px; height: 180px; border-top: 2px solid #c3d3da; background: #fff; }
      .plot { position: relative; overflow: hidden; background: linear-gradient(#a8a8a8, #969696); }
      .plot svg { position: absolute; inset: 0; width: 100%; height: 100%; }
      .axis { position: relative; }
      .price { position: absolute; left: 3px; transform: translateY(-50%); color: #222; }
      .strong { font-weight: bold; color: #000; }
      .tag { position: absolute; left: 2px; padding: 0 1px; transform: translateY(-50%); background: #9c9c9c; font-size: 10px; line-height: 12px; font-weight: bold; }
      .fast { color: #ffff20; }
    `,
  ];

  render() {
    const at = (i: number) => 1412.700 + i * 6.320;
    const path = (v: number[]) => ["1408," + v[0], ...v.map((y, i) => `${at(i)},${y}`)].join(" ");
    const area = `1408,662 ${path(RSI_SLOW)} ${at(52)},662`;
    const top = (y: number) => pct(y, 573, 178);
    return html`
      <div class="plot">
        <svg viewBox="1408 573 470 178" preserveAspectRatio="none" aria-hidden="true">
          <clipPath id="over"><rect x="1408" y="573" width="470" height="89" /></clipPath>
          <clipPath id="under"><rect x="1408" y="662" width="470" height="89" /></clipPath>
          ${SIDE.verticals.map((x) => svg`<rect x=${x} y="573" width="1" height="178" opacity=".1" />`)}
          ${[598, 614, 630, 646, 662, 678, 694, 710, 726].map((y) => svg`<rect x="1408" y=${y} width="470" height="1" opacity=".08" />`)}
          <polygon points=${area} fill="#66c966" clip-path="url(#over)" />
          <polygon points=${area} fill="#c86464" clip-path="url(#under)" />
          <path d="M1408 582h470" stroke="#00ff00" stroke-width="2" />
          <path d="M1408 630.500h470" stroke="#20e820" stroke-dasharray="5 2" />
          <path d="M1408 662.500h470" stroke="#f0f0f0" stroke-dasharray="2 2" />
          <path d="M1408 694.500h470" stroke="#ff1030" stroke-dasharray="4 2" />
          <path d="M1408 743h470" stroke="#ff0000" stroke-width="2" />
          <polyline points=${path(RSI_FAST)} fill="none" stroke="#dcd83a" />
          ${RSI_FAST.map((y, i) => svg`<rect x=${at(i) - 1} y=${y - 1} width="2.400" height="2.400" fill="#dcd83a" />`)}
          <polyline points=${path(RSI_SLOW)} fill="none" stroke="#151515" stroke-width="1.300" />
          ${RSI_SLOW.map((y, i) => svg`<rect x=${at(i) - 1} y=${y - 1} width="2" height="2" fill="#aaa" stroke="#333" stroke-width=".5" />`)}
        </svg>
      </div>
      <div class="axis">
        ${[100, 90, 80, 70, 50, 40, 30, 20, 10].map(
          (v) => html`<span class="price ${v === 100 || v === 50 ? "strong" : ""}" style="top:${top(742.500 - v * 1.605)}">${v}</span>`,
        )}
        <span class="tag" style="top:${top(653)}">58,149</span>
        <span class="tag fast" style="top:${top(641)}">61,138</span>
      </div>
    `;
  }
}

/* ---------------------------------------------------------- order strip */

@customElement("order-strip")
class OrderStrip extends LitElement {
  static styles = [
    base,
    css`
      :host { display: flex; flex: 0 0 246px; align-items: stretch; justify-content: space-between; background: #fff; border-left: 1px solid #8fb4c4; border-radius: 6px 0 0 6px; }
      .col { display: flex; flex-direction: column; align-items: center; }
      .col > label, .col > span { line-height: 10px; white-space: nowrap; }
      .narrow { width: 20px; }
      .more { width: 4px; font-size: 6px; }
      .tool { width: 12px; height: 14px; border: 1px solid #c0c8cc; border-radius: 2px; background: #f4f4f4; align-self: center; margin-top: 2px; }
      .qty { width: 36px; height: 14px; padding-right: 1px; }
      .kind { width: 20px; height: 20px; border: 1px solid #b5bcc0; border-radius: 2px; background: #f2f2f2; }
      .kind .icon { width: 16px; height: 16px; }
      .deal { width: 42px; height: 21px; border-radius: 2px; color: #fff; display: flex; align-items: flex-end; justify-content: flex-start; padding: 0 0 1px 1px; }
      .deal b { font-size: 17px; line-height: 19px; font-weight: normal; }
      .deal small { font-size: 7px; line-height: 10px; white-space: pre; }
      .deal sup { font-size: 8px; line-height: 10px; align-self: flex-start; opacity: .8; }
      .sell { background: #e5484d; }
      .buy { background: #21b52a; }
      .bar { width: 1px; background: #b9c3c8; margin: 4px 0; }
      .opts { display: grid; grid-template-columns: 9px 11px 11px auto; gap: 3px 1px; align-content: center; align-items: center; padding-right: 1px; }
      .pt { width: 11px; height: 12px; border-radius: 3px; text-align: center; }
      .pt:disabled { color: #9aa6ac; background: #e8eef1; }
    `,
  ];

  render() {
    return html`
      <button class="more" aria-label="Options">▸</button>
      <button class="tool" aria-label="Réglages">${icon("wrench", "m")}</button>
      <div class="col"><label for="q">Qté</label><input id="q" class="qty" value="0.5" /></div>
      <i class="bar"></i>
      <div class="col narrow"><span>Limite</span><button class="kind" aria-label="Limite">${icon("limit")}</button></div>
      <i class="bar"></i>
      <div class="col narrow"><span>Stop</span><button class="kind" aria-label="Stop">${icon("stop")}</button></div>
      <i class="bar"></i>
      <div class="col">
        <span>Vendre</span><button class="deal sell"><small>4 9</small><b>48,</b><sup>6</sup></button>
      </div>
      <div class="col">
        <span>Acheter</span><button class="deal buy"><small>4 9</small><b>49,</b><sup>6</sup></button>
      </div>
      <i class="bar"></i>
      <div class="opts">
        <input id="sg" class="tick" type="checkbox" checked disabled /><label class="dim" for="sg">Sg</label>
        <input class="pt" value="10" aria-label="Points de stop" /><span>pts</span>
        <input id="l" class="tick" type="checkbox" /><label for="l">L</label>
        <input class="pt" value="6" disabled aria-label="Points de limite" /><span>pts</span>
      </div>
    `;
  }
}

/* ------------------------------------------------------------------ app */

const TOOLS = [
  "windows", "depthPlus", "cursor", "magnifier", "bell", "ruler", "segment", "line", "hline", "vline", "fork", "fibo",
  "trend", "trash", "tools", "pair", "parallel", "right", "up", "down", "ellipse", "rect", "triangle", "channel", "wedge",
  "textTool",
];

const PALETTE = [
  "#ffffff", "#cfcfcf", "#adadad", "#8c8c8c", "#6b6b6b", "#0a0a0a", "#c4d2ff", "#8fb0ff", "#7fb0f5", "#2a2af0", "#1010c8",
  "#180a98", "#8a1cb0", "#ff7ac8", "#d85a5a", "#ff1010", "#c81818", "#8a3c10", "#ff7a50", "#ff8c70", "#ffa010", "#ffff20",
  "#60f0c0", "#40e8e8", "#48f060", "#20e020", "#10b020", "#108020",
];

const MAIN_TIMES: [string, number][] = [
  ["13:09", 103], ["15:08", 207], ["17:03", 396], ["19:29", 500], ["21:15", 532], ["19", 574], ["03:09", 615],
  ["07:35", 647], ["09:01", 689], ["11:06", 898], ["13:07", 961], ["15:12", 1024], ["17:16", 1086], ["19:00", 1139],
  ["21:05", 1202], ["23:10", 1264], ["20", 1296], ["01:00", 1327],
];
const SIDE_TIMES: [string, number][] = [
  ["07:00", 1426], ["08:00", 1501], ["09:00", 1577], ["10:00", 1652], ["11:00", 1728], ["12:00", 1804],
];

@customElement("app-root")
class AppRoot extends LitElement {
  static styles = [
    base,
    css`
      :host { display: grid; grid-template-rows: 16px 22px minmax(0, 1fr) 1px; height: 100vh; min-height: 720px; background: #9dbcc9; overflow: hidden; }
      .menubar, .toolbar, .title, .footer-bar { background: linear-gradient(#b8d4df, #9cbac7); box-shadow: inset 0 1px #8ea9b5; display: flex; align-items: center; }
      .menubar { gap: 6px; padding: 0 4px 0 2px; }
      .menubar a { color: inherit; text-decoration: none; }
      .menubar a::first-letter { text-decoration: underline; }
      .menubar nav { display: flex; gap: 6px; }
      .menubar .grow, .toolbar .grow { flex: 1; }
      .brand { background: #32373d; color: #fff; padding: 2px 3px; border-radius: 1px; font-weight: bold; margin-left: -2px; }
      .brand em { color: #9be22a; font-style: normal; }
      .sys { display: flex; gap: 2px; color: #6e8894; }
      .toolbar { padding: 0 3px 2px 4px; }
      .search { display: flex; align-items: center; width: 99px; height: 13px; background: #fff; border: 1px solid #c0d0d8; margin-right: 2px; }
      .search input { flex: 1; border: 0; text-align: left; font-style: italic; padding-left: 2px; background: transparent; height: 11px; }
      .search input::placeholder { color: #a8a8a8; opacity: 1; }
      .tool { width: 19px; height: 19px; flex: none; }
      .tool .icon { width: 16px; height: 16px; }
      .tool.on { background: #8fa5b0; margin-left: 6px; }
      .palette { display: grid; grid-template-columns: repeat(14, 8px); grid-auto-rows: 8px; margin-left: 2px; }
      .swatch { border: 1px solid rgba(120, 130, 140, .35); }
      .push, .thru { height: 16px; padding: 0 3px; gap: 3px; }
      .push { background: #4fd657; border-radius: 2px 0 0 2px; }
      .thru { background: #7fe084; border-radius: 0 2px 2px 0; }
      .desk { display: grid; grid-template-columns: 1406fr 514fr; min-height: 0; }
      .win { display: flex; flex-direction: column; min-width: 0; min-height: 0; }
      .main { border: solid #a8c8d6; border-width: 0 3px 0 2px; }
      .side { display: flex; flex-direction: column; min-height: 0; min-width: 0; border: solid #3f7fe3; border-width: 0 2px; }
      .side .upper { flex: 1; }
      .title { height: 16px; flex: none; gap: 3px; }
      .title.active { background: linear-gradient(#6ba3fb, #5089ee); color: #fff; box-shadow: inset 0 1px #6b94c8; }
      .title .caret { font-size: 7px; }
      .info { width: 10px; height: 10px; background: #eef2f4; border: 1px solid #b5bfc4; color: #444; font-size: 7px; line-height: 8px; margin: 0 3px 0 4px; }
      .title.active .quote { background: #0a9d12; color: #fff; padding: 1px; }
      .ctl { margin-left: auto; display: flex; align-items: center; gap: 3px; height: 100%; padding: 0 2px; background: linear-gradient(#6ba3fb, #5089ee); color: #fff; }
      .ctl .icon.s { width: 8px; height: 8px; }
      .stats { display: flex; justify-content: space-evenly; align-items: center; height: 16px; flex: none; background: #9dbac7; white-space: nowrap; box-shadow: inset 0 1px #8aa9b7; padding-bottom: 1px; }
      .stats span { display: inline-flex; align-items: center; gap: 2px; }
      .stats b:first-of-type { margin-left: 2px; }
      .opts { display: flex; height: 31px; flex: none; background: linear-gradient(#a2bfcb, #fff); }
      .pickers { flex: 1; display: flex; justify-content: space-evenly; align-items: center; min-width: 0; }
      .main .pickers { justify-content: space-around; padding: 0 66px; }
      .pair { display: flex; }
      .num { display: flex; position: relative; }
      .num input { width: 56px; height: 13px; padding-right: 8px; border-color: #b0c4ce; }
      .steps { position: absolute; right: 1px; top: 1px; bottom: 1px; width: 7px; display: grid; background: #b9d6e2; }
      .steps button { font-size: 4px; line-height: 4px; }
      .pick { position: relative; display: flex; }
      .pick select { appearance: none; width: 62px; height: 13px; border: 1px solid #b0c4ce; border-radius: 0; background: #fff; padding: 0 12px 0 2px; }
      .pick::after { content: "▾"; position: absolute; right: 1px; top: 1px; bottom: 1px; width: 10px; background: #b4d2df; text-align: center; line-height: 11px; font-size: 10px; pointer-events: none; }
      .style { background: #fff; border: 1px solid #c9d3d8; height: 20px; gap: 2px; padding: 0 1px; }
      .view { position: relative; display: flex; flex-direction: column; flex: 1; min-height: 0; }
      .chip { position: absolute; left: 0; top: 1px; height: 12px; display: flex; align-items: center; gap: 1px; padding: 0 1px 0 2px; background: #b9d6e2; white-space: nowrap; }
      .day { position: absolute; top: 2px; left: 58px; color: #e80000; }
      .day.light { left: 80px; color: #ff1010; }
      .rsi { position: relative; flex: none; }
      .rsi .chip { top: 2px; }
      .times { position: relative; height: 13px; flex: none; background: #fff; display: grid; grid-template-columns: minmax(0, 1fr) 39px; }
      .times svg { width: 100%; height: 13px; }
      .times text { font-size: 8px; fill: #111; }
      .foot { height: 22px; flex: none; display: flex; align-items: center; gap: 6px; padding: 0 4px 2px 1px; background: linear-gradient(#b2cdd8, #9ab8c5); box-shadow: inset 0 1px #c3dae3; }
      .share { background: linear-gradient(#3aa0e8, #1c86d6); color: #fff; height: 16px; width: 49px; gap: 3px; border-radius: 2px; }
      .roll { flex: 1; height: 13px; display: flex; border: 1px solid #8dabb8; background: #a0bdca; justify-content: flex-end; margin: 0 -4px; }
      .thumb { width: 32px; background: #b0cbd6; border: 1px solid #c0d8e2; display: grid; place-items: center; }
      .thumb::after { content: ""; width: 4px; height: 1px; background: #8dabb8; }
      .main .thumb { width: 145px; }
      .arrow { width: 9px; height: 13px; background: #c4dbe5; font-size: 6px; }
      .lower { flex: none; border-top: 2px solid #3f7fe3; background: #cdd9e1; }
      .grid { display: grid; grid-template-columns: 168fr 175fr 167fr; }
      .cell { border: solid #8fb0bf; border-width: 0 1px 1px 0; min-width: 0; }
      .facts { display: grid; grid-template-columns: 48px 1fr; grid-template-rows: 12px 12px 12px 15px 15px 14px; align-items: center; padding: 12px 0 0 6px; height: 103px; white-space: nowrap; margin: 0; }
      .facts dt, .facts dd { margin: 0; display: flex; align-items: center; gap: 2px; white-space: pre; }
      .ticket { display: flex; flex-direction: column; align-items: center; padding-top: 10px; }
      .ticket .size { width: 57px; height: 23px; font-size: 17px; margin-top: 1px; border-color: #c0d0d8; }
      .guard { display: flex; align-items: center; gap: 2px; height: 14px; margin-top: 6px; white-space: nowrap; }
      .guard label + input { margin-left: 2px; }
      .guard .tick.lim { margin-left: 10px; }
      .guard .pt { width: 12px; height: 13px; text-align: center; border-radius: 2px; }
      .guard .pt.slim { width: 8px; }
      .guard .pt:disabled { background: transparent; color: #9aa6ac; }
      .ticket .rule { align-self: stretch; height: 1px; background: #a8c0cc; margin: 13px 6px 6px; }
      .ticks { display: flex; gap: 56px; }
      .ticks .num input { width: 30px; }
      .deal { display: flex; flex-direction: column; align-items: center; height: 90px; width: 100%; padding: 3px 0 0; }
      .deal span { font-size: 17px; line-height: 20px; color: rgba(255, 255, 255, .55); }
      .deal b { font-size: 40px; line-height: 46px; font-weight: normal; margin-top: 5px; color: #000; }
      .deal small { font-size: 8px; line-height: 10px; margin-top: 4px; }
      .sell { background: #e9bbbb; }
      .buy { background: #a8d0a8; }
      .mid { display: grid; grid-template: 19px 1fr / 1fr 1fr; color: #94a2a9; border-right: 1px solid #8fb0bf; }
      .mid button { border-bottom: 1px solid #8fb0bf; }
      .mid button:first-child { border-right: 1px solid #8fb0bf; }
      .mid p { grid-column: 1 / 3; margin: 0; display: grid; place-items: center; }
      .acts { display: grid; grid-template-columns: 19px 204fr 229fr 57px; height: 20px; border-top: 1px solid #8fb0bf; color: #94a2a9; }
      .acts > * { border-right: 1px solid #8fb0bf; }
      .acts div { display: flex; align-items: center; justify-content: space-evenly; border-right: 0; }
      table { width: 100%; border-collapse: collapse; table-layout: fixed; background: #446b98; color: #fff; }
      th { padding: 0; height: 12px; font-weight: normal; }
      th .icon { display: inline-block; vertical-align: middle; margin: 0 1px; }
      th.tools { text-align: left; width: 26px; line-height: 8px; }
      th.qty { width: 146px; }
      th.unit { width: 182px; }
      .empty { height: 37px; background: #9dbac7; }
      .empty td { padding: 0; }
      .footer-bar { height: 13px; box-shadow: none; display: grid; grid-template-columns: 1fr auto 1fr; padding: 0 1px; }
      .footer-bar span { display: inline-flex; align-items: center; gap: 1px; }
      .footer-bar .end { justify-content: flex-end; }
      .edge { background: #2f4048; }
    `,
  ];

  private title(active: boolean, pin = false) {
    return html`<header class=${classMap({ title: true, active })}>
      ${icon(active ? "candlesWhite" : "candles", "m")}<span class="caret">▾</span><span>PXI</span>
      <button class="info" aria-label="Informations">i</button>
      <b class=${active ? "quote" : "quote pos"}>4 949,1 (+0,24%)</b>
      ${active ? html`<b>11:14:23 France 40 Cash (1€)</b>` : html`<span><b>11:14:23</b> France 40 Cash (1€)</span>`}
      <div class="ctl">
        <button aria-label="Clavier">${icon("keyboard", "w")}</button>
        ${pin ? html`<button aria-label="Épingler">${icon("pin", "s")}</button>` : nothing}
        <button aria-label="Réduire">${icon("min", "s")}</button>
        <button aria-label="Agrandir">${icon("max", "s")}</button>
        <button aria-label="Fermer">${icon("close", "s")}</button>
      </div>
    </header>`;
  }

  private stats() {
    return html`<div class="stats">
      <span>Ordres : <b>0</b>${icon("cancelGrey", "s")} / <b>0</b>${icon("gears", "m")}</span>
      <span>Position : &nbsp;<b>0</b>${icon("cancelRed", "s")} / <b>0</b>${icon("gears", "m")}</span>
      <span>Durée pos. : <b>-</b></span>
      <span>Gain latent : <b>0,00 pts</b></span>
      <span>Gain Jour : <b class="neg">-4,23 pts</b></span>
      <span>Trades jour : <b class="pos">27</b> / <b>0</b> / <b class="neg">9</b></span>
    </div>`;
  }

  private num(value: string, label: string) {
    return html`<span class="num"
      ><input value=${value} aria-label=${label} /><span class="steps"
        ><button aria-label="Plus">▲</button><button aria-label="Moins">▼</button></span
      ></span
    >`;
  }

  private pick(value: string, label: string) {
    return html`<span class="pick"><select aria-label=${label}><option>${value}</option></select></span>`;
  }

  private times(list: [string, number][], from: number, span: number) {
    return html`<div class="times">
      <svg>
        ${list.map(
          ([t, x]) => svg`<rect x=${pct(x, from, span)} y="0" width="1" height="2" fill="#789" />
          <text x=${pct(x, from, span)} y="10" text-anchor="middle" font-weight=${t.length === 2 ? "bold" : "normal"}>${t}</text>`,
        )}
      </svg>
    </div>`;
  }

  private foot() {
    return html`<div class="foot">
      <button class="share">${icon("share", "m")}Partager</button>
      <button aria-label="Lier">${icon("chain")}</button>
      <button aria-label="Note">${icon("note")}</button>
      <button aria-label="Carnet">${icon("depth")}</button>
      <button class="arrow" aria-label="Reculer">◀</button>
      <div class="roll"><span class="thumb"></span></div>
      <button class="arrow" aria-label="Avancer">▶</button>
      <button aria-label="Affichage">${icon("wrenchCandles")}</button>
      <button aria-label="Ajuster">${icon("zoomFit")}</button>
      <button aria-label="Zoom arrière">${icon("zoomOut")}</button>
      <button aria-label="Zoom avant">${icon("zoomIn")}</button>
    </div>`;
  }

  render() {
    const style = html`<button class="style" aria-label="Style du graphique">${icon("chartKind", "kind")}<span>▾</span></button>`;
    return html`
      <div class="menubar">
        ${icon("candles", "m")}
        <nav>
          ${["Fichier", "Affichage", "Trading", "Objets", "Options", "Aide"].map((m) => html`<a href="#">${m}</a>`)}
        </nav>
        <span class="grow"></span>
        <span>DAX</span>
        <span class="brand"><em>ProRealTime</em> Complete</span>
        <span class="sys">
          <button aria-label="Épingler">${icon("pin", "s")}</button>
          <button aria-label="Réduire">${icon("min", "s")}</button>
          <button aria-label="Fermer">${icon("close", "s")}</button>
        </span>
      </div>
      <div class="toolbar">
        <div class="search"><input placeholder="Recherche ..." aria-label="Recherche" />${icon("lens", "m")}</div>
        ${TOOLS.map((t) => html`<button class=${classMap({ tool: true, on: t === "cursor" })} aria-label=${t}>${icon(t)}</button>`)}
        <div class="palette">
          ${PALETTE.map((c) => html`<button class="swatch" aria-label=${c} style="background:${c}"></button>`)}
        </div>
        <span class="grow"></span>
        <button class="push">Push+ ${icon("candles", "m")}</button>
        <button class="thru">DealThru ${icon("thru")}</button>
      </div>
      <div class="desk">
        <section class="win main">
          ${this.title(false)} ${this.stats()}
          <div class="opts">
            <div class="pickers">
              <span class="pair">${this.num("500", "Unités")}${this.pick("(x) unités", "Type d'unités")}</span>
              <span class="pair">${this.num("500", "Ticks")}${this.pick("(x) ticks", "Type de période")}</span>
              ${style}
            </div>
            <order-strip></order-strip>
          </div>
          <div class="view">
            <price-chart .data=${MAIN}></price-chart>
            <div class="chip">Prix ${icon("wrench", "m")}${icon("tileDown", "m")}${icon("tileUp", "m")}</div>
            <span class="day">Jour :+Haut 4 958,1 +Bas 4 916,8</span>
          </div>
          ${this.times(MAIN_TIMES, 2, 1362)} ${this.foot()}
        </section>
        <div class="side">
          <section class="win upper">
            ${this.title(true)} ${this.stats()}
            <div class="opts">
              <div class="pickers">${this.pick("100 unités", "Unités")}${this.pick("5 minutes", "Période")}${style}</div>
              <order-strip></order-strip>
            </div>
            <div class="view">
              <price-chart .data=${SIDE}></price-chart>
              <div class="chip">
                Prix ${icon("wrench", "m")}${icon("pane", "m")}${icon("closeRound", "m")}${icon("tileDown", "m")}${icon("tileUp", "m")}
              </div>
              <span class="day light">Jour :+Haut 4 958,1 +Bas 4 916,8</span>
            </div>
            <div class="rsi">
              <rsi-chart></rsi-chart>
              <div class="chip">
                Relative strength index (RSI) (21) Relative strength index (RSI) (14)
                ${icon("wrench", "m")}${icon("pane", "m")}${icon("closeRound", "m")}
              </div>
            </div>
            ${this.times(SIDE_TIMES, 1408, 470)} ${this.foot()}
          </section>
          <section class="lower">
            ${this.title(false, true)}
            <div class="grid">
              <dl class="cell facts">
                <dt>Gain latent :</dt><dd><b>0,00 pts</b></dd>
                <dt>Gain Jour :</dt><dd><b class="neg">-4,23 pts</b></dd>
                <dt>Trades jour :</dt><dd><b class="pos">27</b> / <b>0</b> / <b class="neg">9</b></dd>
                <dt>Ordres :</dt><dd><b>0</b>${icon("cancelGrey", "s")} / <b>0</b>${icon("gears", "m")}</dd>
                <dt>Position :</dt><dd><b>0</b>${icon("cancelRed", "s")} / <b>0</b>${icon("gears", "m")}</dd>
                <dt>Durée pos. :</dt><dd><b>-</b></dd>
              </dl>
              <div class="cell ticket">
                <label for="size">Qté</label>
                <input id="size" class="size" value="0.5" />
                <div class="guard">
                  <input id="sl" class="tick" type="checkbox" checked disabled /><label class="dim" for="sl">Stop (G)</label>
                  <input class="pt" value="10" aria-label="Points de stop" />pts
                  <input id="tp" class="tick lim" type="checkbox" /><label for="tp">Limite</label>
                  <input class="pt slim" value="6" disabled aria-label="Points de limite" />pts
                </div>
                <div class="rule"></div>
                <div class="ticks">${this.num("1", "Ticks de stop")}${this.num("1", "Ticks de limite")}</div>
              </div>
              <div class="cell"></div>
              <button class="deal sell"><span>Vendre 0,5</span><b>4 948,6</b><small>+ Stop (G) 10</small></button>
              <div class="mid">
                <button disabled>Stop à 1 ticks</button><button disabled>Limite à 1 ticks</button>
                <p>Pas de position</p>
              </div>
              <button class="deal buy"><span>Acheter 0,5</span><b>4 949,6</b><small>+ Stop (G) 10</small></button>
            </div>
            <div class="acts">
              <button aria-label="Disposition">${icon("layout")}</button>
              <button disabled>Inverser position</button>
              <button disabled>Pas d'ordres en attente</button>
              <div>
                <button aria-label="Signal">${icon("signal")}</button>
                <button aria-label="Lier">${icon("chain")}</button>
                <button aria-label="Carnet">${icon("depthArrow")}</button>
              </div>
            </div>
            <table>
              <thead>
                <tr>
                  <th class="tools">${icon("export", "s")}${icon("wrenchWhite", "s")}</th>
                  <th class="qty">Qté</th>
                  <th class="unit">Prix de revient unitaire</th>
                  <th>${icon("upWhite", "s")}</th>
                </tr>
              </thead>
              <tbody><tr class="empty"><td colspan="4"></td></tr></tbody>
            </table>
            <div class="footer-bar">
              <span>Offre ${icon("arrowRight", "s")}<b>0</b></span>
              <span>Spread: 1,0</span>
              <span class="end"><b>0</b>${icon("arrowLeft", "s")} Demande</span>
            </div>
          </section>
        </div>
      </div>
      <div class="edge"></div>
    `;
  }
}
